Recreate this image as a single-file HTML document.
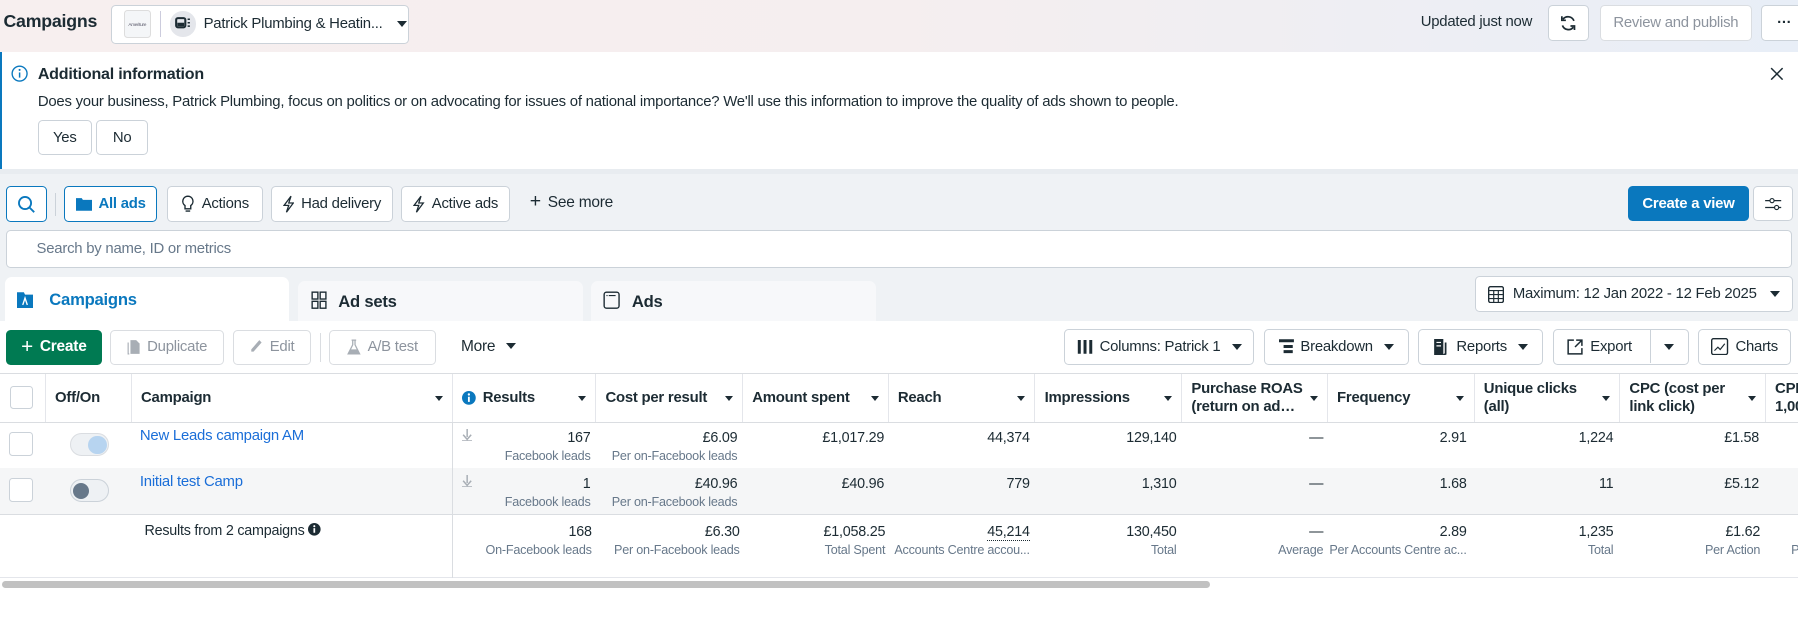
<!DOCTYPE html>
<html><head><meta charset="utf-8"><style>
html,body{margin:0;padding:0;width:1798px;height:629px;overflow:hidden;background:#fff}
#w{position:relative;width:1568px;height:549px;zoom:1.14668;font-family:"Liberation Sans",sans-serif;font-size:13px;color:#1c2b33;letter-spacing:-0.2px}
.a{position:absolute}
.btn{position:absolute;box-sizing:border-box;border:1px solid #cbd2d9;border-radius:4px;background:#fff;display:flex;align-items:center;justify-content:center;gap:6px;font-size:13px;color:#1c2b33}
.tri{display:inline-block;width:0;height:0;border-left:5px solid transparent;border-right:5px solid transparent;border-top:6px solid #1c2b33}
.th{position:absolute;top:326px;height:42px;box-sizing:border-box;border-right:1px solid #e4e6eb;display:flex;align-items:center;padding:0 8px;font-weight:bold;font-size:13px;line-height:16px}
.th .tri{position:absolute;right:8px;top:19px;border-left-width:4px;border-right-width:4px;border-top-width:5px}
.c{position:absolute;text-align:right;font-size:12.5px;line-height:16px}
.s{color:#67788a;font-size:11px}
</style></head><body><div id="w">
<!-- top bar -->
<div class="a" style="left:0;top:0;width:1568px;height:45px;background:linear-gradient(90deg,#f7efef 0%,#f5eeef 50%,#e8eef7 100%)"></div>
<div class="a" style="left:3px;top:10px;font-size:15.5px;font-weight:bold">Campaigns</div>
<div class="btn" style="left:97px;top:4px;width:260px;height:34px;justify-content:flex-start;padding-left:10px;gap:0">
 <div style="width:22px;height:22px;border:1px solid #ddd;border-radius:3px;background:#f4f6f8;font-size:4px;display:flex;align-items:center;justify-content:center;color:#556">Ameriture</div>
 <div style="width:1px;height:22px;background:#ccd;margin:0 8px"></div>
 <div style="width:22px;height:22px;border-radius:50%;background:#e4e6eb;display:flex;align-items:center;justify-content:center"><svg width="14" height="12"><rect x="1" y="1" width="8" height="8" rx="1.5" fill="none" stroke="#1c2b33" stroke-width="1.8"/><rect x="2" y="5" width="6" height="3" fill="#1c2b33"/><path d="M11 2h2M11 5h2M11 8h2" stroke="#1c2b33" stroke-width="1.3"/></svg></div>
 <span style="margin-left:7px">Patrick Plumbing &amp; Heatin...</span>
 <span class="tri" style="margin-left:13px"></span>
</div>
<div class="a" style="left:1239px;top:12px">Updated just now</div>
<div class="btn" style="left:1350px;top:4px;width:36px;height:32px"><svg width="16" height="16" viewBox="0 0 16 16"><path d="M13 6A5.5 5.5 0 0 0 3.5 4.5M3 10a5.5 5.5 0 0 0 9.5 1.5" fill="none" stroke="#1c2b33" stroke-width="1.5"/><path d="M2.5 2v3.5H6M13.5 14v-3.5H10" fill="none" stroke="#1c2b33" stroke-width="1.5"/></svg></div>
<div class="btn" style="left:1395px;top:4px;width:133px;height:32px;color:#8d949e;border-color:#dadde1">Review and publish</div>
<div class="btn" style="left:1536px;top:4px;width:40px;height:32px;font-weight:bold">···</div>
<!-- banner -->
<div class="a" style="left:0;top:45px;width:1568px;height:102px;background:#fff;border-left:2px solid #0a78be;box-sizing:border-box"></div>
<svg class="a" style="left:10px;top:57px" width="15" height="15"><circle cx="7.5" cy="7.5" r="6.5" fill="none" stroke="#0a78be" stroke-width="1.2"/><path d="M7.5 6.5v4.5" stroke="#0a78be" stroke-width="1.3"/><circle cx="7.5" cy="4.3" r=".9" fill="#0a78be"/></svg>
<div class="a" style="left:33px;top:57px;font-weight:bold;font-size:14px">Additional information</div>
<div class="a" style="left:33px;top:82px">Does your business, Patrick Plumbing, focus on politics or on advocating for issues of national importance? We'll use this information to improve the quality of ads shown to people.</div>
<div class="btn" style="left:33px;top:105px;width:47px;height:30px">Yes</div>
<div class="btn" style="left:84px;top:105px;width:45px;height:30px">No</div>
<svg class="a" style="left:1544px;top:58px" width="12" height="12"><path d="M1 1L11 11M11 1L1 11" stroke="#1c2b33" stroke-width="1.3"/></svg>
<!-- gray area -->
<div class="a" style="left:0;top:147px;width:1568px;height:133px;background:#eff2f5;border-top:5px solid #e8ecf0;box-sizing:border-box"></div>
<div class="btn" style="left:5px;top:162px;width:36px;height:32px;border-color:#0a78be"><svg width="16" height="16"><circle cx="7" cy="7" r="5.3" fill="none" stroke="#0a78be" stroke-width="1.6"/><path d="M11 11l4 4" stroke="#0a78be" stroke-width="1.6"/></svg></div>
<div class="a" style="left:48px;top:168px;width:1px;height:20px;background:#cbd2d9"></div>
<div class="btn" style="left:56px;top:162px;width:81px;height:32px;border-color:#0a78be;color:#0a78be;font-weight:bold"><svg width="14" height="12"><path d="M0 1h5l1 1.5h8V12H0z" fill="#0a78be"/></svg>All ads</div>
<div class="btn" style="left:146px;top:162px;width:83px;height:32px"><svg width="12" height="16"><path d="M6 1a4.5 4.5 0 0 0-2.5 8.2V12h5V9.2A4.5 4.5 0 0 0 6 1zM4 14h4" fill="none" stroke="#1c2b33" stroke-width="1.2"/></svg>Actions</div>
<div class="btn" style="left:236px;top:162px;width:107px;height:32px"><svg width="10" height="16"><path d="M7 1L1 9h4l-2 6 6-8H5z" fill="none" stroke="#1c2b33" stroke-width="1.1"/></svg>Had delivery</div>
<div class="btn" style="left:350px;top:162px;width:95px;height:32px"><svg width="10" height="16"><path d="M7 1L1 9h4l-2 6 6-8H5z" fill="none" stroke="#1c2b33" stroke-width="1.1"/></svg>Active ads</div>
<div class="a" style="left:462px;top:169px;font-size:13.5px"><span style="font-size:17px;line-height:13px;margin-right:6px">+</span>See more</div>
<div class="btn" style="left:1420px;top:162px;width:105px;height:31px;background:#0a78be;border-color:#0a78be;color:#fff;font-weight:bold">Create a view</div>
<div class="btn" style="left:1529px;top:162px;width:35px;height:31px"><svg width="16" height="14"><path d="M1 4h4M9 4h6M1 10h8M13 10h2" stroke="#1c2b33" stroke-width="1.1"/><circle cx="7" cy="4" r="1.8" fill="none" stroke="#1c2b33"/><circle cx="11" cy="10" r="1.8" fill="none" stroke="#1c2b33"/></svg></div>
<div class="btn" style="left:5px;top:201px;width:1558px;height:33px;justify-content:flex-start;padding-left:26px;color:#67788a">Search by name, ID or metrics</div>
<!-- tabs -->
<div class="a" style="left:4px;top:242px;width:248px;height:40px;background:#fff;border-radius:6px 6px 0 0"></div>
<svg class="a" style="left:15px;top:253px" width="14" height="16"><path d="M0 2h6l1 2h7v12H0z" fill="#0a78be"/><path d="M5 13l2-6 2 6" fill="none" stroke="#fff" stroke-width="1.2"/></svg>
<div class="a" style="left:43px;top:253px;font-weight:bold;font-size:14.5px;color:#0a78be">Campaigns</div>
<div class="a" style="left:260px;top:245px;width:248px;height:35px;background:#f7f8fa;border-radius:6px 6px 0 0"></div>
<svg class="a" style="left:271px;top:254px" width="14" height="16"><g fill="none" stroke="#1c2b33" stroke-width="1.2"><rect x="1" y="1" width="5" height="6"/><rect x="8" y="1" width="5" height="6"/><rect x="1" y="9" width="5" height="6"/><rect x="8" y="9" width="5" height="6"/></g></svg>
<div class="a" style="left:295px;top:255px;font-weight:bold;font-size:14.5px">Ad sets</div>
<div class="a" style="left:515px;top:245px;width:249px;height:35px;background:#f7f8fa;border-radius:6px 6px 0 0"></div>
<svg class="a" style="left:526px;top:254px" width="15" height="16"><rect x="1" y="1" width="13" height="14" rx="2" fill="none" stroke="#1c2b33" stroke-width="1.2"/><path d="M3 4h1M5 4h6" stroke="#1c2b33"/></svg>
<div class="a" style="left:551px;top:255px;font-weight:bold;font-size:14.5px">Ads</div>
<div class="btn" style="left:1286px;top:241px;width:278px;height:31px;gap:8px"><svg width="14" height="15"><rect x=".6" y=".6" width="12.8" height="13.8" rx="1.5" fill="none" stroke="#1c2b33" stroke-width="1.2"/><path d="M1 4h12M1 7.5h12M1 11h12M5 4v10M9 4v10" stroke="#1c2b33"/></svg>Maximum: 12 Jan 2022 - 12 Feb 2025<span class="tri" style="margin-left:4px"></span></div>
<!-- toolbar -->
<div class="btn" style="left:5px;top:288px;width:84px;height:30px;background:#007a52;border-color:#007a52;color:#fff;font-weight:bold;font-size:13.5px"><span style="font-size:18px;font-weight:normal;line-height:14px">+</span>Create</div>
<div class="btn" style="left:96px;top:288px;width:99px;height:30px;color:#8d949e;border-color:#dadde1"><svg width="12" height="14"><path d="M3 1h5l3 3v9H3z" fill="#a8aeb5"/><path d="M1 3v10h1" fill="none" stroke="#a8aeb5"/></svg>Duplicate</div>
<div class="btn" style="left:203px;top:288px;width:68px;height:30px;color:#8d949e;border-color:#dadde1"><svg width="12" height="14"><path d="M9 1l2 2-7 8H2v-2z" fill="#a8aeb5"/></svg>Edit</div>
<div class="a" style="left:279px;top:290px;width:1px;height:26px;background:#dadde1"></div>
<div class="btn" style="left:287px;top:288px;width:93px;height:30px;color:#8d949e;border-color:#dadde1"><svg width="12" height="14"><path d="M4 1h4M5 1v4L1 13h10L7 5V1" fill="none" stroke="#a8aeb5" stroke-width="1.1"/><path d="M3 9h6l2 4H1z" fill="#a8aeb5"/></svg>A/B test</div>
<div class="a" style="left:402px;top:295px;font-size:13.5px">More <span class="tri" style="margin-left:6px;vertical-align:2px"></span></div>
<div class="btn" style="left:928px;top:287px;width:166px;height:31px"><svg width="14" height="12"><path d="M2 0v12M7 0v12M12 0v12" stroke="#1c2b33" stroke-width="2.6"/></svg>Columns: Patrick 1<span class="tri" style="margin-left:4px"></span></div>
<div class="btn" style="left:1102px;top:287px;width:127px;height:31px"><svg width="13" height="13"><path d="M0 1.5h13M4 6.5h8M4 11h8" stroke="#1c2b33" stroke-width="2.6"/></svg>Breakdown<span class="tri" style="margin-left:4px"></span></div>
<div class="btn" style="left:1237px;top:287px;width:109px;height:31px"><svg width="14" height="14"><rect x="1" y="0" width="8" height="14" fill="#1c2b33"/><path d="M3 3h4M3 6h4" stroke="#fff"/><path d="M11 3v10l-2 1" fill="none" stroke="#1c2b33" stroke-width="1.5"/></svg>Reports<span class="tri" style="margin-left:4px"></span></div>
<div class="btn" style="left:1354px;top:287px;width:119px;height:31px;justify-content:flex-start;padding-left:12px"><svg width="14" height="14"><path d="M6 1H1v12h12V8M8 1h5v5M13 1L7 7" fill="none" stroke="#1c2b33" stroke-width="1.3"/></svg>Export<div style="position:absolute;left:84px;top:0;width:1px;height:29px;background:#cbd2d9"></div><span class="tri" style="position:absolute;left:96px;top:12px"></span></div>
<div class="btn" style="left:1481px;top:287px;width:81px;height:31px"><svg width="15" height="15"><rect x=".6" y=".6" width="13.8" height="13.8" rx="1.5" fill="none" stroke="#1c2b33" stroke-width="1.2"/><path d="M3 11l3-3 2 2 4-5" fill="none" stroke="#1c2b33"/></svg>Charts</div>
<!-- table -->
<div class="a" style="left:0;top:325px;width:1568px;height:1px;background:#dadde1"></div>
<div class="a" style="left:0;top:368px;width:1568px;height:1px;background:#dadde1"></div>
<div class="a" style="left:0;top:408px;width:1568px;height:40px;background:#f5f6f7"></div>
<div class="a" style="left:0;top:448px;width:1568px;height:1px;background:#dadde1"></div>
<div class="a" style="left:0;top:503px;width:1568px;height:1px;background:#e4e6eb"></div>
<div class="a" style="left:394px;top:368px;width:1px;height:136px;background:#dadde1"></div>
<div class="th" style="left:0;width:40px"><div style="width:20px;height:20px;border:1px solid #cbd2d9;border-radius:3px;box-sizing:border-box;margin-left:1px"></div></div>
<div class="th" style="left:40px;width:75px">Off/On</div>
<div class="th" style="left:115px;width:280px">Campaign<span class="tri"></span></div>
<div class="th" style="left:395px;width:125px"><svg width="12" height="12" style="margin-right:6px"><circle cx="6" cy="6" r="6" fill="#0a78be"/><path d="M6 5v4.5" stroke="#fff" stroke-width="1.6"/><circle cx="6" cy="3" r="1" fill="#fff"/></svg>Results<span class="tri"></span></div>
<div class="th" style="left:520px;width:128px">Cost per result<span class="tri"></span></div>
<div class="th" style="left:648px;width:127px">Amount spent<span class="tri"></span></div>
<div class="th" style="left:775px;width:128px">Reach<span class="tri"></span></div>
<div class="th" style="left:903px;width:128px">Impressions<span class="tri"></span></div>
<div class="th" style="left:1031px;width:127px">Purchase ROAS<br>(return on ad…<span class="tri"></span></div>
<div class="th" style="left:1158px;width:128px">Frequency<span class="tri"></span></div>
<div class="th" style="left:1286px;width:127px">Unique clicks<br>(all)<span class="tri"></span></div>
<div class="th" style="left:1413px;width:127px">CPC (cost per<br>link click)<span class="tri"></span></div>
<div class="th" style="left:1540px;width:40px;border:none">CPM<br>1,000</div>
<!-- rows -->
<div class="a" style="left:8px;top:377px;width:21px;height:21px;border:1px solid #cbd2d9;border-radius:3px;box-sizing:border-box;background:#fff"></div>
<div class="a" style="left:8px;top:417px;width:21px;height:21px;border:1px solid #cbd2d9;border-radius:3px;box-sizing:border-box;background:#fff"></div>
<div class="a" style="left:61px;top:378px;width:34px;height:20px;border-radius:10px;background:#eef1f4;border:1px solid #dadde1;box-sizing:border-box"><div style="position:absolute;right:1px;top:1px;width:16px;height:16px;border-radius:50%;background:#b7d4f0"></div></div>
<div class="a" style="left:61px;top:418px;width:34px;height:20px;border-radius:10px;background:#eef1f4;border:1px solid #cbd2d9;box-sizing:border-box"><div style="position:absolute;left:2px;top:2px;width:14px;height:14px;border-radius:50%;background:#67788a"></div></div>
<div class="a" style="left:122px;top:373px;color:#1a6ed8;font-size:13px">New Leads campaign AM</div>
<div class="a" style="left:122px;top:413px;color:#1a6ed8;font-size:13px">Initial test Camp</div>
<div class="a" style="left:126px;top:456px;font-size:12.5px">Results from 2 campaigns <svg width="11" height="11" style="vertical-align:-1px"><circle cx="5.5" cy="5.5" r="5.5" fill="#1c2b33"/><path d="M5.5 4.5v4" stroke="#fff" stroke-width="1.5"/><circle cx="5.5" cy="2.8" r=".9" fill="#fff"/></svg></div>
<svg class="a" style="left:403px;top:374px" width="9" height="11"><path d="M4.5 0v7M1 5l3.5 4 3.5-4M0 10.5h9" fill="none" stroke="#a8aeb5" stroke-width="1.3"/></svg>
<svg class="a" style="left:403px;top:414px" width="9" height="11"><path d="M4.5 0v7M1 5l3.5 4 3.5-4M0 10.5h9" fill="none" stroke="#a8aeb5" stroke-width="1.3"/></svg>

<div class="c" style="right:1053px;top:374px">167<br><span class="s">Facebook leads</span></div>
<div class="c" style="right:925px;top:374px">£6.09<br><span class="s">Per on-Facebook leads</span></div>
<div class="c" style="right:797px;top:374px">£1,017.29</div>
<div class="c" style="right:670px;top:374px">44,374</div>
<div class="c" style="right:542px;top:374px">129,140</div>
<div class="c" style="right:414px;top:374px">—</div>
<div class="c" style="right:289px;top:374px">2.91</div>
<div class="c" style="right:161px;top:374px">1,224</div>
<div class="c" style="right:34px;top:374px">£1.58</div>

<div class="c" style="right:1053px;top:414px">1<br><span class="s">Facebook leads</span></div>
<div class="c" style="right:925px;top:414px">£40.96<br><span class="s">Per on-Facebook leads</span></div>
<div class="c" style="right:797px;top:414px">£40.96</div>
<div class="c" style="right:670px;top:414px">779</div>
<div class="c" style="right:542px;top:414px">1,310</div>
<div class="c" style="right:414px;top:414px">—</div>
<div class="c" style="right:289px;top:414px">1.68</div>
<div class="c" style="right:161px;top:414px">11</div>
<div class="c" style="right:34px;top:414px">£5.12</div>

<div class="c" style="right:1052px;top:456px">168<br><span class="s">On-Facebook leads</span></div>
<div class="c" style="right:923px;top:456px">£6.30<br><span class="s">Per on-Facebook leads</span></div>
<div class="c" style="right:796px;top:456px">£1,058.25<br><span class="s">Total Spent</span></div>
<div class="c" style="right:670px;top:456px"><span style="border-bottom:1px dotted #1c2b33">45,214</span><br><span class="s">Accounts Centre accou...</span></div>
<div class="c" style="right:542px;top:456px">130,450<br><span class="s">Total</span></div>
<div class="c" style="right:414px;top:456px">—<br><span class="s">Average</span></div>
<div class="c" style="right:289px;top:456px">2.89<br><span class="s">Per Accounts Centre ac...</span></div>
<div class="c" style="right:161px;top:456px">1,235<br><span class="s">Total</span></div>
<div class="c" style="right:33px;top:456px">£1.62<br><span class="s">Per Action</span></div>
<div class="c" style="left:1562px;top:472px;text-align:left"><span class="s">P</span></div>
<!-- scrollbar -->
<div class="a" style="left:2px;top:507px;width:1053px;height:6px;border-radius:3px;background:#c1c1c1"></div>
</div></body></html>
